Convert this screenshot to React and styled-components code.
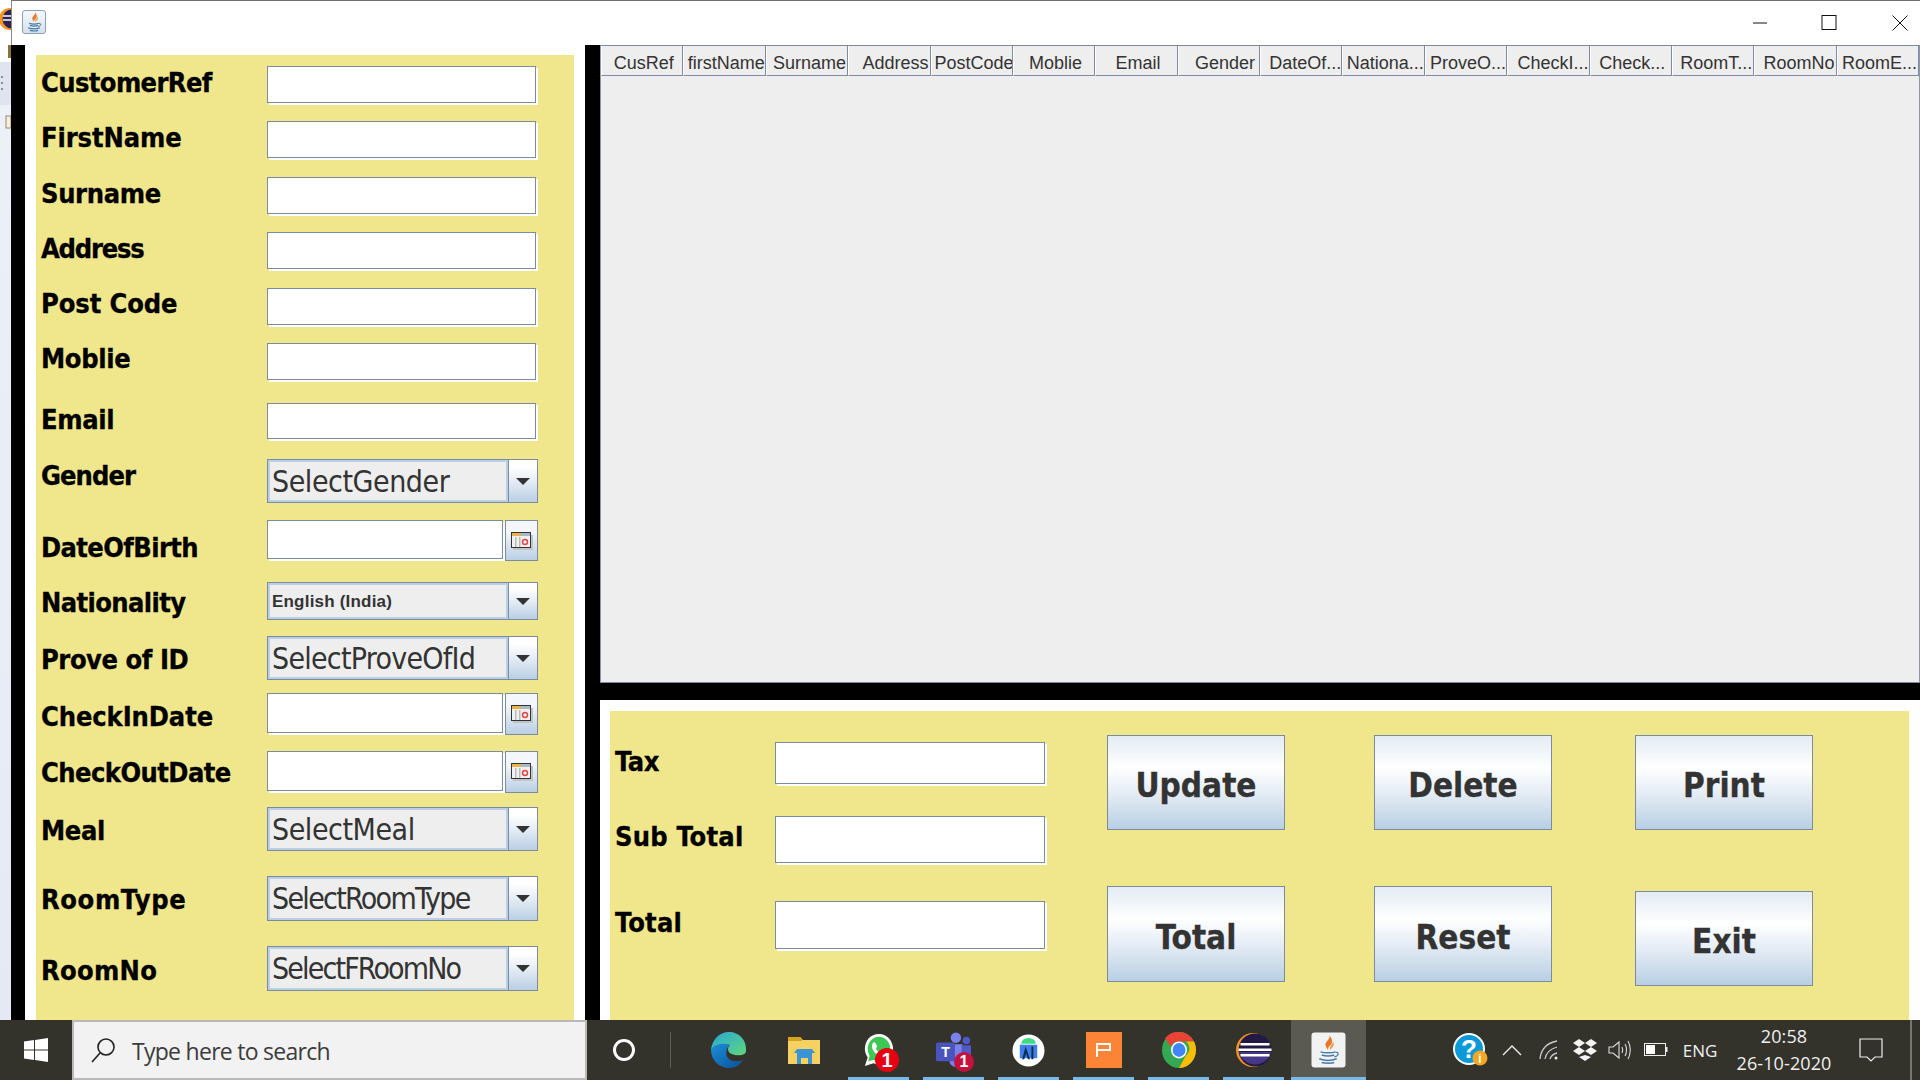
import React from "react";
import styled, { createGlobalStyle } from "styled-components";

const Global = createGlobalStyle`
  html, body { margin: 0; padding: 0; width: 1920px; height: 1080px; overflow: hidden; background: #fff; }
  * { box-sizing: border-box; }
`;

const Screen = styled.div`
  width: 1920px; height: 1080px; display: flex; flex-direction: column; overflow: hidden;
`;
const Desk = styled.div`
  flex: 1; min-height: 0; display: flex;
`;
const DesktopStrip = styled.div`
  width: 11px; flex: none; display: flex; flex-direction: column; align-items: flex-start;
  background: linear-gradient(#fff 0 62px, #dfe4f0 62px 105px, #eef0f8 105px, #e6e9f4);
`;
const Window = styled.div`
  flex: 1; min-width: 0; display: flex; flex-direction: column; background: #fff;
  border-top: 1px solid #6f6f6f;
`;
const TitleBar = styled.div`
  height: 44px; flex: none; display: flex; align-items: flex-start; padding: 9px 12px 0 10px;
  border-left: 1px solid #8a8a8a;
`;
const AppIcon = styled.div`
  width: 24px; height: 24px; border: 1px solid #8aa0b5; border-radius: 3px;
  background: linear-gradient(#f6f9fc, #d5e1ec); display: flex; align-items: center; justify-content: center;
`;
const WinControls = styled.div`
  margin-left: auto; display: flex; align-items: center; gap: 53px; height: 16px; margin-top: 5px;
  svg:last-child { margin-left: 2px; }
`;
const Body = styled.div`
  flex: 1; min-height: 0; display: flex; background: #000;
`;
const LeftWrap = styled.div`
  margin-left: 14px; width: 560px; flex: none; background: #fff; padding: 10px 11px 0;
`;
const Form = styled.div`
  height: 100%; background: #f0e68c; padding: 0 0 0 5px; display: flex; flex-direction: column;
`;
const Row = styled.div`
  display: flex; align-items: flex-start; margin-top: ${p => p.$gap}px; height: ${p => p.$h}px; flex: none;
`;
const Label = styled.div`
  width: ${p => p.$w}px; flex: none; font: bold 27px/30px "DejaVu Sans Condensed", "DejaVu Sans", sans-serif;
  font-stretch: condensed; color: #000; margin-top: ${p => p.$top}px; white-space: nowrap;
  letter-spacing: ${p => p.$track}px;
  -webkit-text-stroke: 0.3px #000;
`;
const Field = styled.div`
  width: ${p => p.$w}px; height: ${p => p.$h}px; background: #fff; border: 1px solid #7c8ba0;
  margin: 0 ${p => p.$shadow}px ${p => p.$shadow}px 0; box-shadow: ${p => p.$shadow}px ${p => p.$shadow}px 0 #fff;
  flex: none;
`;
const Combo = styled.div`
  width: 271px; height: 100%; flex: none; display: flex; border: 1px solid #7c8ba0; background: #eee;
`;
const ComboText = styled.div`
  flex: 1; min-width: 0; border: 2px solid #b8cfe6; display: flex; align-items: center; padding-left: 2px;
  padding-top: ${p => p.$small ? 2 : 0}px;
  color: #333; white-space: nowrap;
  font: ${p => p.$small ? 'bold 17px "Liberation Sans", Arial, sans-serif' : '400 30px "DejaVu Sans Condensed", "DejaVu Sans", sans-serif'};
  font-stretch: ${p => p.$small ? 'normal' : 'condensed'};
  letter-spacing: ${p => p.$track}px;
`;
const ArrowBtn = styled.div`
  width: 29px; flex: none; border-left: 1px solid #7c8ba0; display: flex; align-items: center; justify-content: center;
  background: linear-gradient(#fff 15%, #eaf0f7 45%, #b9cfe4);
  &::after { content: ""; border: 7px solid transparent; border-top: 7px solid #333; border-bottom: 0; }
`;
const DateBtn = styled.div`
  width: 33px; height: 100%; flex: none; border: 1px solid #7c8ba0; display: flex;
  align-items: center; justify-content: center; background: linear-gradient(#f3f6fa 30%, #b9cfe4);
`;
const RightCol = styled.div`
  margin-left: 15px; width: 1320px; flex: none; display: flex; flex-direction: column;
`;
const TablePane = styled.div`
  height: 638px; flex: none; background: #eee; border-left: 1px solid #8d99a8; border-bottom: 1px solid #7c8ba0;
  border-right: 1px solid #8d99a8; display: flex; align-items: flex-start;
`;
const Header = styled.div`
  width: 100%; height: 31px; display: grid; grid-template-columns: repeat(16, 1fr);
  border-top: 1px solid #7c8ba0;
`;
const Head = styled.div`
  border-left: 1px solid #fff; border-right: 1px solid #7c8ba0; border-bottom: 1px solid #7c8ba0;
  display: flex; align-items: center; justify-content: ${p => p.$align}; overflow: hidden; white-space: nowrap;
  font: 18px "Liberation Sans", Arial, sans-serif; color: #333; background: #eee;
  padding: 5px ${p => p.$pr}px 0 3px;
`;
const BottomPane = styled.div`
  margin-top: 17px; flex: 1; min-height: 0; background: #fff; padding: 11px 11px 0 10px;
`;
const Khaki = styled.div`
  height: 100%; background: #f0e68c; display: flex; padding-left: 5px;
`;
const Totals = styled.div`
  width: 432px; flex: none; display: flex; flex-direction: column;
`;
const Buttons = styled.div`
  margin-left: 60px; padding-top: 24px; display: grid;
  grid-template-columns: 178px 178px 178px; column-gap: 89px; grid-template-rows: 96px 96px; row-gap: 55px;
`;
const Btn = styled.div`
  width: 178px; height: ${p => p.$h}px; margin-left: ${p => p.$left}px; margin-top: ${p => p.$top}px;
  border: 1px solid #7c8ba0; display: flex; align-items: center; justify-content: center; padding-top: 6px;
  background: linear-gradient(#e3ebf4, #fff 34%, #e4ecf5 62%, #b9cfe4);
  font: bold 33px "DejaVu Sans Condensed", "DejaVu Sans", sans-serif; font-stretch: condensed; color: #333;
  -webkit-text-stroke: 0.3px #333;
`;
const Taskbar = styled.div`
  height: 60px; flex: none; background: #33322b; display: flex; position: relative; align-items: stretch;
`;
const Start = styled.div`
  width: 72px; flex: none; display: flex; align-items: center; justify-content: center; padding-bottom: 1px;
`;
const Search = styled.div`
  width: 515px; flex: none; background: #f2f2f2; border: 2px solid #b9b9b7;
  display: flex; align-items: center; padding-left: 16px; gap: 16px;
  font: 23px "Open Sans", "Noto Sans", sans-serif; color: #3c3c3c; letter-spacing: -0.72px;
`;
const SearchText = styled.span`
  padding-top: 2px;
`;
const Cortana = styled.div`
  width: 73px; flex: none; display: flex; align-items: center; justify-content: center;
`;
const Divider = styled.div`
  width: 1px; height: 36px; align-self: center; background: #5f5f59; margin: 0 20px 0 10px;
`;
const Slot = styled.div`
  width: 75px; flex: none; display: flex; align-items: center; justify-content: center; position: relative;
  background: ${p => p.$active ? "#5a5a52" : "transparent"};
  &::after { content: ""; display: ${p => p.$on ? "block" : "none"}; position: absolute; bottom: 0;
    left: ${p => p.$active ? 0 : 7}px; right: ${p => p.$active ? 0 : 7}px; height: 3px; background: #76b9ed; }
`;
const Badge = styled.span`
  position: absolute; right: 17px; bottom: 8px; width: ${p => p.$d}px; height: ${p => p.$d}px; border-radius: 50%;
  background: ${p => p.$c}; color: #fff; text-align: center;
  font: bold ${p => p.$d - 4}px/${p => p.$d}px "Liberation Sans", Arial, sans-serif;
`;
const Tray = styled.div`
  margin-left: auto; display: flex; align-items: center; height: 100%; color: #f0f0f0;
  font: 17px "Open Sans", "Noto Sans", sans-serif;
`;
const TrayItem = styled.div`
  width: ${p => p.$w}px; display: flex; align-items: center; justify-content: center; flex: none;
`;
const Clock = styled.div`
  width: 116px; text-align: center; line-height: 27px; font-size: 18px; flex: none; letter-spacing: 0.1px;
`;
const ShowDesktop = styled.div`
  width: 2px; height: 100%; background: #77776f; margin-left: 11px; margin-right: 8px;
`;

const JavaGlyph = ({ s = 20 }) => (
  <svg width={s} height={s} viewBox="0 0 24 24" fill="none">
    <path d="M13 0c2 3.500-5 5.500-2.500 9.500.6 1 1.200 1.700 1.500 2.500-.2-2 1-3 2.500-4.500C16 6 15.500 3 13 0z" fill="#e8792b" />
    <path d="M16 5c.5 2-3 3.500-2.500 7 1.500-1.500 4.500-3.500 2.500-7z" fill="#ef9a4a" />
    <path d="M6 13.500c3 1 9 1 12 0M7 16c3 1 7 1 10 0M5 19c4 1.500 10 1.500 14 0M7 22c3 .8 8 .8 10 0" stroke="#4a7ba6" strokeWidth="1.500" />
    <path d="M18 14c3-1 3 3-1 3.500" stroke="#4a7ba6" strokeWidth="1.200" />
  </svg>
);
const Calendar = () => (
  <svg width="22" height="18" viewBox="0 0 22 18">
    <rect x="2" y="3" width="20" height="15" fill="#c4c4c4" />
    <rect x="0.500" y="0.500" width="19" height="15" fill="#f1f1f1" stroke="#333" />
    <rect x="1" y="1" width="9" height="3" fill="#e9b44c" />
    <rect x="10" y="1" width="9" height="3" fill="#a8b8c8" />
    <rect x="4" y="5" width="1.500" height="10" fill="#bbb" />
    <rect x="8" y="5" width="1.500" height="10" fill="#bbb" />
    <circle cx="14" cy="10" r="2.500" fill="none" stroke="#e04848" strokeWidth="1.500" />
  </svg>
);
const Ctl = {
  Min: () => <svg width="16" height="16"><path d="M1 8h14" stroke="#111" /></svg>,
  Max: () => <svg width="16" height="16"><rect x="1" y=".5" width="14" height="14" fill="none" stroke="#111" /></svg>,
  Close: () => <svg width="16" height="16"><path d="M.5.500l15 15M15.500.500l-15 15" stroke="#111" /></svg>,
};

const TextRow = ({ gap, h, label, top, lt = -0.35, shadow = 2 }) => (
  <Row $gap={gap} $h={h}>
    <Label $w={226} $top={top} $track={lt}>{label}</Label>
    <Field $w={269} $h={h - shadow} $shadow={shadow} />
  </Row>
);
const ComboRow = ({ gap, h, label, top, value, small, lt = -0.35, track = -0.45 }) => (
  <Row $gap={gap} $h={h}>
    <Label $w={226} $top={top} $track={lt}>{label}</Label>
    <Combo><ComboText $small={small} $track={track}>{value}</ComboText><ArrowBtn /></Combo>
  </Row>
);
const DateRow = ({ gap, h, label, top, lt = -0.35 }) => (
  <Row $gap={gap} $h={h}>
    <Label $w={226} $top={top} $track={lt}>{label}</Label>
    <Field $w={236} $h={h - 2} $shadow={2} />
    <DateBtn><Calendar /></DateBtn>
  </Row>
);
const TotalRow = ({ gap, h, label, top, lt = -0.35 }) => (
  <Row $gap={gap} $h={h}>
    <Label $w={160} $top={top} $track={lt}>{label}</Label>
    <Field $w={270} $h={h - 2} $shadow={2} />
  </Row>
);

const heads = [
  ["CusRef", "center", 0], ["firstName", "flex-end", 0], ["Surname", "flex-end", 1], ["Address", "flex-end", 1], ["PostCode", "flex-start", 0],
  ["Moblie", "center", 0], ["Email", "center", 0], ["Gender", "flex-end", 4], ["DateOf...", "flex-end", 0], ["Nationa...", "flex-end", 0],
  ["ProveO...", "flex-end", 0], ["CheckI...", "flex-end", 0], ["Check...", "center", 0], ["RoomT...", "flex-end", 1], ["RoomNo", "flex-end", 1], ["RoomE...", "flex-end", 1],
];

const IconEdge = () => (
  <svg width="38" height="38" viewBox="0 0 38 38">
    <defs>
      <linearGradient id="eg" x1="0" y1="0" x2="1" y2="1"><stop offset="0" stopColor="#2aa5d8" /><stop offset="1" stopColor="#5fd87a" /></linearGradient>
      <linearGradient id="eb" x1="0" y1="0" x2="1" y2="1"><stop offset="0" stopColor="#1b8fd6" /><stop offset="1" stopColor="#0c4f9a" /></linearGradient>
    </defs>
    <path d="M19 1C29 1 37 9 36 20c0 4-6 5-11 4-5-1-7-3-7-6 0-2 1-3 2-4-5-1-10 3-10 9-2-4-7-6-9-4C2 9 9 1 19 1z" fill="url(#eg)" />
    <path d="M1 19c0 10 8 18 18 18 6 0 11-3 14-8-5 2-12 2-15-2-3-4-2-10 2-13-8-3-17 0-19 5z" fill="url(#eb)" />
  </svg>
);
const IconFolder = () => (
  <svg width="34" height="34" viewBox="0 0 34 34">
    <path d="M1 4h12l3 3h17v24H1z" fill="#f5d161" />
    <path d="M1 4h12l2 2v2H1z" fill="#d9a21c" />
    <path d="M10 31V19h15v12h-4v-6h-7v6z" fill="#3c93d6" />
    <path d="M7 20h21l-3-4H10z" fill="#3c93d6" />
  </svg>
);
const IconWa = () => (
  <svg width="32" height="34" viewBox="0 0 34 36">
    <path d="M17 1C8 1 2 8 2 17c0 3 1 6 3 9l-3 9 9-3c2 1 4 1.500 6 1.500 9 0 15-7 15-16S26 1 17 1z" fill="#fff" />
    <path d="M17 4C10 4 5 10 5 17c0 3 1 5 2 7l-1.500 6 6-1.500c2 1 4 1.500 5.500 1.500 7 0 12-6 12-13S24 4 17 4z" fill="#3fc756" />
    <path d="M12 10c2 0 2 3 3 4 0 1-2 2-1 3 1 2 3 4 5 4 1 0 1.500-2 2.500-1.500 1 .5 3 1.500 3 2.500 0 2-2 3-4 3-5 0-11-6-11-11 0-2 1-4 2.500-4.500z" fill="#fff" />
  </svg>
);
const IconTeams = () => (
  <svg width="36" height="36" viewBox="0 0 38 38">
    <circle cx="21" cy="6" r="5.500" fill="#7b83eb" />
    <circle cx="32" cy="9" r="4" fill="#5059c9" />
    <path d="M14 13h14v17a7 7 0 0 1-14 0z" fill="#7b83eb" />
    <path d="M27 14h10v11a5 5 0 0 1-10 0z" fill="#5059c9" />
    <rect x="0" y="11" width="20" height="20" rx="2" fill="#4b53bc" />
    <text x="10" y="26" textAnchor="middle" fill="#fff" fontFamily="Liberation Sans" fontWeight="700" fontSize="15">T</text>
  </svg>
);
const IconStudio = () => (
  <svg width="33" height="33" viewBox="0 0 34 34">
    <circle cx="17" cy="17" r="16.500" fill="#fff" />
    <path d="M9.500 10a7.500 6 0 0 1 15 0z" fill="#3ddc84" />
    <path d="M8 11h18v14H8z" fill="#3f7fe8" />
    <path d="M14 13l-3.500 13h2l2-6 2 6h2zM20 13h2v13h-2z" fill="#0b2d52" />
  </svg>
);
const IconWps = () => (
  <svg width="36" height="36" viewBox="0 0 36 36">
    <rect width="36" height="36" fill="#fb8437" />
    <path d="M11 25v-13h13v6H12" fill="none" stroke="#fff" strokeWidth="2" />
  </svg>
);
const IconChrome = () => (
  <svg width="34" height="36" viewBox="0 0 34 34" preserveAspectRatio="none">
    <circle cx="17" cy="17" r="17" fill="#34a853" />
    <path d="M17 0a17 17 0 0 1 15 9H17a8 8 0 0 0-8 5L3 6a17 17 0 0 1 14-6z" fill="#ea4335" />
    <path d="M32 9a17 17 0 0 1-15 25l7-12a8 8 0 0 0 0-13z" fill="#fbbc05" />
    <circle cx="17" cy="17" r="8" fill="#fff" />
    <circle cx="17" cy="17" r="6.500" fill="#4285f4" />
  </svg>
);
const IconEclipse = () => (
  <svg width="36" height="34" viewBox="0 0 36 34">
    <ellipse cx="17" cy="17" rx="17" ry="17" fill="#f7941e" />
    <ellipse cx="19" cy="17" rx="16.500" ry="16.500" fill="#221a44" />
    <path d="M3 19h32a16.500 16.500 0 0 1-32 0z" fill="#473788" />
    <rect x="4.500" y="10" width="29" height="2.500" fill="#fff" />
    <rect x="2.500" y="15.500" width="33" height="2.500" fill="#fff" />
    <rect x="4.500" y="21" width="29" height="2.500" fill="#fff" />
  </svg>
);
const IconJava = () => (
  <svg width="35" height="36" viewBox="0 0 35 36">
    <rect x=".5" y=".5" width="34" height="35" rx="3" fill="#f1f3f3" />
    <svg x="2" y="3" width="30" height="30" viewBox="0 0 24 24" fill="none">
      <path d="M13 0c2 3.500-5 5.500-2.500 9.500.6 1 1.200 1.700 1.500 2.500-.2-2 1-3 2.500-4.500C16 6 15.500 3 13 0z" fill="#e8792b" />
      <path d="M16 5c.5 2-3 3.500-2.500 7 1.500-1.500 4.500-3.500 2.500-7z" fill="#ef9a4a" />
      <path d="M6 13.500c3 1 9 1 12 0M7 16c3 1 7 1 10 0M5 19c4 1.500 10 1.500 14 0M7 22c3 .8 8 .8 10 0" stroke="#4a7ba6" strokeWidth="1.200" />
      <path d="M18 14c3-1 3 3-1 3.500" stroke="#4a7ba6" strokeWidth="1" />
    </svg>
  </svg>
);
const slots = [
  { I: IconEdge }, { I: IconFolder },
  { I: IconWa, on: 1, badge: { d: 24, c: "#e60012" } },
  { I: IconTeams, on: 1, badge: { d: 20, c: "#c5123c" } },
  { I: IconStudio, on: 1 }, { I: IconWps, on: 1 }, { I: IconChrome, on: 1 }, { I: IconEclipse, on: 1 }, { I: IconJava, on: 1, active: 1 },
];

export default function App() {
  return (
    <Screen>
      <Global />
      <Desk>
        <DesktopStrip>
          <svg width="11" height="130" viewBox="0 0 11 130">
            <circle cx="10" cy="19" r="11" fill="#f7941e" />
            <circle cx="12" cy="19" r="9.500" fill="#2c2255" />
            <path d="M3 16h8M3 20h8" stroke="#fff" strokeWidth="1.500" />
            <rect x="8" y="45" width="3" height="13" fill="#8d6f3c" />
            <path d="M1 76h2v2H1zM1 82h2v2H1zM1 88h2v2H1z" fill="#8c8f99" />
            <rect x="6" y="116" width="5" height="12" fill="#f6f0dc" stroke="#94886a" />
          </svg>
        </DesktopStrip>
        <Window>
          <TitleBar>
            <AppIcon><JavaGlyph s={20} /></AppIcon>
            <WinControls><Ctl.Min /><Ctl.Max /><Ctl.Close /></WinControls>
          </TitleBar>
          <Body>
            <LeftWrap>
              <Form>
                <TextRow gap={11} h={39} label="CustomerRef" top={2} lt={-0.6} />
                <TextRow gap={16} h={39} label="FirstName" top={2} lt={-0.1} />
                <TextRow gap={17} h={39} label="Surname" top={2} />
                <TextRow gap={16} h={39} label="Address" top={2} lt={-1.2} />
                <TextRow gap={17} h={39} label="Post Code" top={1} lt={-0.1} />
                <TextRow gap={16} h={39} label="Moblie" top={1} />
                <TextRow gap={21} h={38} label="Email" top={2} />
                <ComboRow gap={18} h={44} label="Gender" top={2} value="SelectGender" lt={-0.9} />
                <DateRow gap={17} h={41} label="DateOfBirth" top={13} lt={-0.6} />
                <ComboRow gap={21} h={38} label="Nationality" top={6} value="English (India)" small track={0.2} lt={-0.6} />
                <ComboRow gap={16} h={44} label="Prove of ID" top={9} value="SelectProveOfId" track={-0.75} lt={-0.45} />
                <DateRow gap={13} h={42} label="CheckInDate" top={9} lt={-0.1} />
                <DateRow gap={16} h={42} label="CheckOutDate" top={7} lt={-0.55} />
                <ComboRow gap={14} h={44} label="Meal" top={9} value="SelectMeal" />
                <ComboRow gap={25} h={45} label="RoomType" top={9} value="SelectRoomType" track={-1.7} lt={0.6} />
                <ComboRow gap={25} h={45} label="RoomNo" top={10} value="SelectFRoomNo" track={-1.85} lt={0.3} />
              </Form>
            </LeftWrap>
            <RightCol>
              <TablePane>
                <Header>
                  {heads.map(([t, a, pr]) => (
                    <Head key={t} $align={a} $pr={pr}>{t}</Head>
                  ))}
                </Header>
              </TablePane>
              <BottomPane>
                <Khaki>
                  <Totals>
                    <TotalRow gap={31} h={44} label="Tax" top={5} />
                    <TotalRow gap={30} h={49} label="Sub Total" top={6} lt={0.2} />
                    <TotalRow gap={36} h={50} label="Total" top={7} lt={0.2} />
                  </Totals>
                  <Buttons>
                    <Btn $h={95} $left={0} $top={0}>Update</Btn>
                    <Btn $h={95} $left={0} $top={0}>Delete</Btn>
                    <Btn $h={95} $left={-6} $top={0}>Print</Btn>
                    <Btn $h={96} $left={0} $top={0}>Total</Btn>
                    <Btn $h={96} $left={0} $top={0}>Reset</Btn>
                    <Btn $h={95} $left={-6} $top={5}>Exit</Btn>
                  </Buttons>
                </Khaki>
              </BottomPane>
            </RightCol>
          </Body>
        </Window>
      </Desk>
      <Taskbar>
        <Start>
          <svg width="24" height="24" viewBox="0 0 24 24" fill="#fff">
            <path d="M0 3.500l10-1.400V11.500H0zM11 2l13-2v11.500H11zM0 12.500h10v9.400L0 20.500zM11 12.500h13V24l-13-2z" />
          </svg>
        </Start>
        <Search>
          <svg width="26" height="26" viewBox="0 0 26 26" fill="none" stroke="#222" strokeWidth="1.600">
            <circle cx="16" cy="10" r="8" /><path d="M10 16L2 25" />
          </svg>
          <SearchText>Type here to search</SearchText>
        </Search>
        <Cortana>
          <svg width="24" height="24"><circle cx="12" cy="12" r="9.500" fill="none" stroke="#fff" strokeWidth="3" /></svg>
        </Cortana>
        <Divider />
        {slots.map(({ I, on, active, badge }, i) => (
          <Slot key={i} $on={on} $active={active}>
            <I />
            {badge && <Badge $d={badge.d} $c={badge.c}>1</Badge>}
          </Slot>
        ))}
        <Tray>
          <TrayItem $w={44}>
            <svg width="36" height="34" viewBox="0 0 36 34">
              <circle cx="16" cy="16" r="15" fill="#0b9ad7" stroke="#fff" strokeWidth="2" />
              <text x="16" y="25" textAnchor="middle" fill="#fff" fontFamily="Liberation Sans" fontWeight="700" fontSize="26">?</text>
              <circle cx="27" cy="25" r="7.500" fill="#f5a623" />
              <text x="27" y="30" textAnchor="middle" fill="#fff" fontFamily="Liberation Sans" fontWeight="700" fontSize="12">i</text>
            </svg>
          </TrayItem>
          <TrayItem $w={38}>
            <svg width="20" height="12"><path d="M1 11l9-9 9 9" fill="none" stroke="#eee" strokeWidth="1.400" /></svg>
          </TrayItem>
          <TrayItem $w={36}>
            <svg width="20" height="20" viewBox="0 0 20 20" fill="none" stroke="#ccc" strokeWidth="1.300">
              <path d="M1 19C2 9 8 3 18 1M6 19c1-6 5-10 12-12M11 19c1-3 3-5 7-6" /><circle cx="17" cy="18" r="1.500" fill="#eee" stroke="none" />
            </svg>
          </TrayItem>
          <TrayItem $w={35}>
            <svg width="24" height="22" viewBox="0 0 24 22" fill="#f4f4f4">
              <path d="M6 0L0 4l6 4 6-4zM18 0l-6 4 6 4 6-4zM0 12l6 4 6-4-6-4zM24 12l-6 4-6-4 6-4zM6 18l6 4 6-4-6-2-6 2z" />
            </svg>
          </TrayItem>
          <TrayItem $w={36}>
            <svg width="24" height="20" viewBox="0 0 24 20" fill="none" stroke="#ddd" strokeWidth="1.100">
              <path d="M1 7h4l6-5v16l-6-5H1zM14 7c1 2 1 4 0 6M17 4c2 3 2 9 0 12M20 1c3 5 3 13 0 18" />
            </svg>
          </TrayItem>
          <TrayItem $w={36}>
            <svg width="24" height="14" viewBox="0 0 24 14">
              <rect x=".5" y=".5" width="21" height="12" fill="none" stroke="#eee" />
              <rect x="2" y="2" width="9" height="9" fill="#fff" /><rect x="22" y="4" width="1.500" height="5" fill="#eee" />
            </svg>
          </TrayItem>
          <TrayItem $w={52}>ENG</TrayItem>
          <Clock>20:58<br />26-10-2020</Clock>
          <TrayItem $w={57}>
            <svg width="26" height="26" viewBox="0 0 26 26" fill="none" stroke="#eee" strokeWidth="1.200">
              <path d="M2 2h22v18h-7l-4 4-4-4H2z" />
            </svg>
          </TrayItem>
          <ShowDesktop />
        </Tray>
      </Taskbar>
    </Screen>
  );
}
